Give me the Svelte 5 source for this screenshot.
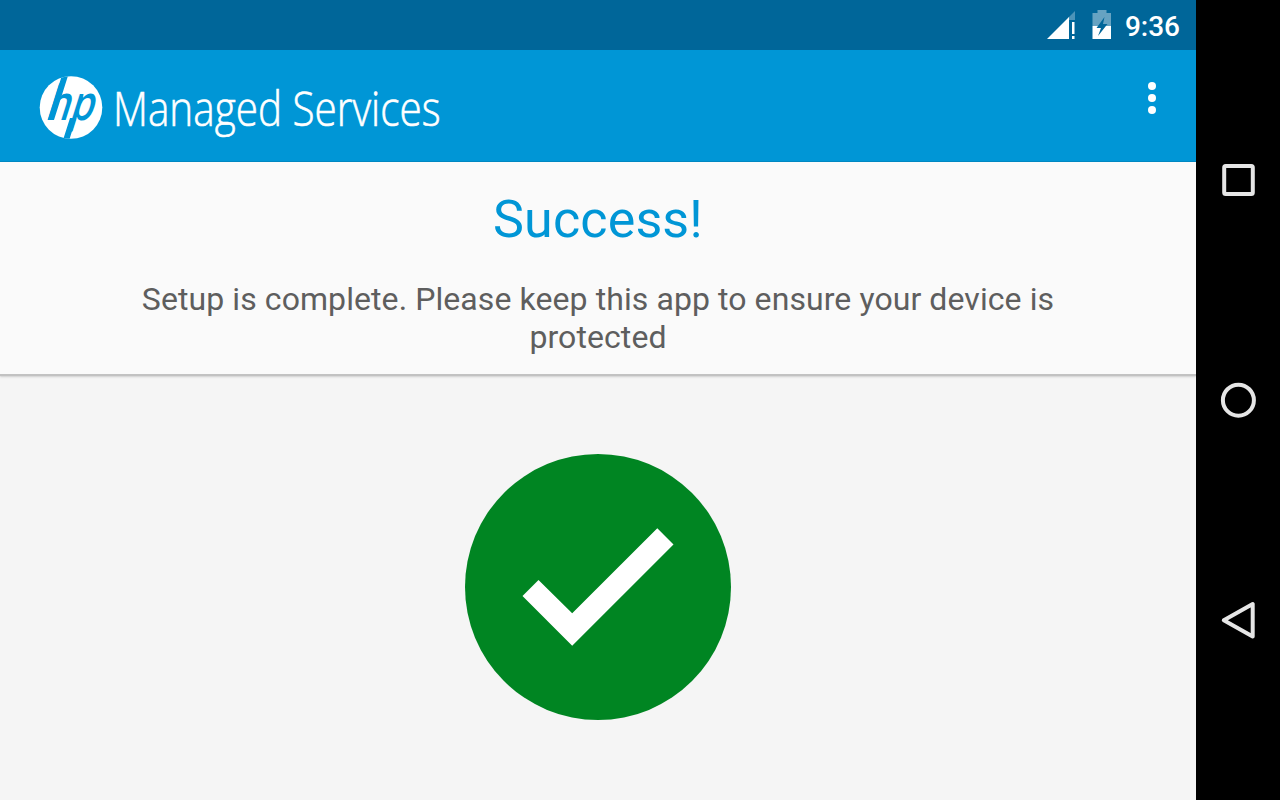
<script lang="ts">
	const time = '9:36';
	const title = 'Managed Services';
	const heading = 'Success!';
	const message = 'Setup is complete. Please keep this app to ensure your device is protected';
	const dots = [8, 20, 32];
</script>

<div id="device">
	<div class="screen">
		<div class="status-bar">
			<svg class="signal" width="30" height="30" viewBox="0 0 30 30">
				<path d="M29 1v9h-7v-2z" fill="#4c94b9" />
				<path d="M23 7v22H1z" fill="#fff" />
				<path d="M24 10h6v19h-6z" fill="#006699" />
				<path d="M26 12h2.500v12H26zM26 26h2.500v3H26z" fill="#fff" />
			</svg>
			<svg class="battery" width="20" height="30" viewBox="0 0 20 30">
				<path d="M5.500 0h9v3H19v13H.500V3h5z" fill="#66a3c2" />
				<path d="M.5 16H19v13H.500z" fill="#fff" />
				<path d="M12.500 7 4.500 18h4.500L6 26l9.500-12H11z" fill="#006699" />
			</svg>
			<span class="time">{time}</span>
		</div>

		<header>
			<svg class="brand" width="500" height="84" viewBox="0 0 500 84">
				<defs>
					<clipPath id="disc"><circle cx="41" cy="40.500" r="31.300" /></clipPath>
				</defs>
				<circle cx="41" cy="40.500" r="31.300" fill="#fff" />
				<g clip-path="url(#disc)">
					<path d="M33 5h6.200L24 53h-6.200zM40 51h6.200L37 80h-6.200z" fill="#0096d6" />
					<text class="mark" transform="translate(14.500 53) skewX(-17.500)" textLength="47.500" lengthAdjust="spacingAndGlyphs">hp</text>
				</g>
				<text class="title" x="83" y="59" textLength="327.500" lengthAdjust="spacingAndGlyphs">{title}</text>
			</svg>
			<button class="menu" aria-label="More options">
				<svg width="16" height="40" viewBox="0 0 16 40" fill="#fff">
					{#each dots as y (y)}
						<circle cx="8" cy={y} r="4" />
					{/each}
				</svg>
			</button>
		</header>

		<section>
			<h1>{heading}</h1>
			<p>{message}</p>
		</section>

		<main>
			<svg width="266" height="266" viewBox="0 0 266 266">
				<circle cx="133" cy="133" r="133" fill="#008522" />
				<path d="M57.500 142 73.500 126l33.700 33.300L192.300 74.300l16.200 16.200L107.200 191.700z" fill="#fff" />
			</svg>
		</main>
	</div>

	<nav>
		<button aria-label="Recent apps">
			<svg width="40" height="40" viewBox="0 0 40 40">
				<rect x="6.200" y="6.100" width="28.600" height="28" rx="1.500" />
			</svg>
		</button>
		<button aria-label="Home">
			<svg width="40" height="40" viewBox="0 0 40 40">
				<circle cx="20.400" cy="20.200" r="15.500" />
			</svg>
		</button>
		<button aria-label="Back">
			<svg width="40" height="40" viewBox="0 0 40 40">
				<path d="M34.700 4v32.500L5.800 20.200z" stroke-linejoin="round" />
			</svg>
		</button>
	</nav>
</div>

<style>
	#device {
		display: flex;
		width: 1280px;
		height: 800px;
		overflow: hidden;
		font-family: Roboto, sans-serif;
	}

	.screen {
		display: flex;
		flex-direction: column;
		width: 1196px;
		background-color: #f5f5f5;
	}

	.status-bar {
		display: flex;
		align-items: center;
		justify-content: flex-end;
		box-sizing: border-box;
		height: 50px;
		padding-right: 16px;
		background-color: #006699;
	}

	.battery {
		margin-left: 16px;
	}

	.time {
		margin: 3px 0 0 13px;
		color: white;
		font-size: 28px;
		font-weight: 500;
	}

	header {
		display: flex;
		align-items: flex-start;
		justify-content: space-between;
		box-sizing: border-box;
		height: 112px;
		padding: 17px 24px 0 30px;
		border-bottom: 1px solid #0087c1;
		background-color: #0096d6;
	}

	.mark {
		fill: #0096d6;
		font-family: 'Open Sans', sans-serif;
		font-size: 48px;
		font-weight: 600;
	}

	.title {
		fill: white;
		stroke: white;
		stroke-width: 0.6px;
		font-family: 'Open Sans', sans-serif;
		font-size: 47px;
		font-weight: 300;
	}

	button {
		display: flex;
		padding: 0;
		border: 0;
		background-color: transparent;
		cursor: pointer;
	}

	.menu {
		width: 40px;
		margin: 11px 0 0;
		justify-content: center;
	}

	section {
		box-sizing: border-box;
		height: 212px;
		padding: 27px 120px 0;
		background-color: #fafafa;
		box-shadow:
			0 2px 1px #c2c2c2,
			0 3px 2px #d4d4d4;
		text-align: center;
	}

	h1 {
		margin: 0;
		color: #0096d6;
		font-size: 52px;
		font-weight: 400;
		letter-spacing: 0.15px;
		line-height: 61px;
	}

	p {
		margin: 30px 0 0;
		color: #5e5e5e;
		font-size: 32px;
		letter-spacing: 0.08px;
		line-height: 38px;
	}

	main {
		display: flex;
		flex: 1;
		align-items: center;
		justify-content: center;
	}

	nav {
		display: flex;
		flex: 1;
		flex-direction: column;
		align-items: center;
		justify-content: center;
		gap: 180px;
		background-color: black;
	}

	nav svg {
		fill: none;
		stroke: #e6e6e6;
		stroke-width: 4;
	}
</style>
